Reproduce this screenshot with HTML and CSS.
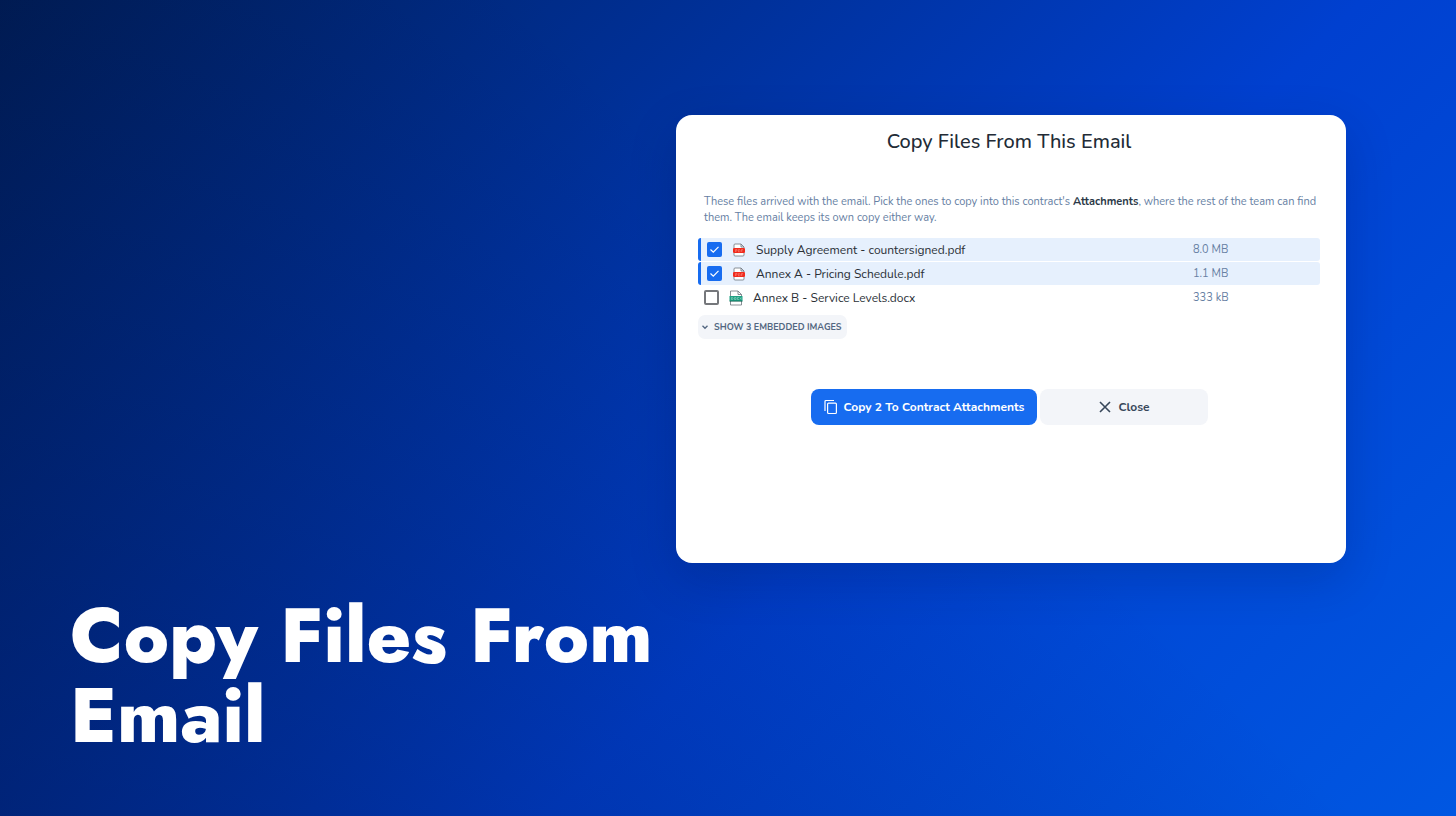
FILE: index.html
```html
<!DOCTYPE html>
<html lang="en">
<head>
<meta charset="utf-8">
<meta name="viewport" content="width=device-width, initial-scale=1">
<title>Copy Files From Email</title>
<link rel="stylesheet" href="styles.css">
</head>
<body>
<main class="slide">
  <h1 class="headline">Copy Files From Email</h1>
  <section class="dialog" aria-labelledby="dialog-title">
    <h2 class="dialog-title" id="dialog-title">Copy Files From This Email</h2>
    <p class="intro">These files arrived with the email. Pick the ones to copy into this contract's <strong>Attachments</strong>, where the rest of the team can find them. The email keeps its own copy either way.</p>
    <ul class="files">
      <li class="file selected">
        <input class="tick" type="checkbox" id="f1" checked>
        <svg class="file-icon" viewBox="0 0 16 16" aria-hidden="true"><path d="M3 6V3Q3 2 4 2H10L13 5V6M3 11V13Q3 14 4 14H12Q13 14 13 13V11M10 2V5H13" fill="#fff" stroke="#6c737c" stroke-width=".8"/><rect x="2" y="6" width="12" height="5" rx="1" fill="#f02b1d"/><path d="M4.500 10V7.500H6V9H4.500M7.500 7.500V10H8.500L9 9.500V8L8.500 7.500ZM10.500 10V7.500H12M10.500 8.800H11.700" fill="none" stroke="#f9948b" stroke-width=".5"/></svg>
        <label class="name" for="f1">Supply Agreement - countersigned.pdf</label>
        <span class="size">8.0 MB</span>
      </li>
      <li class="file selected">
        <input class="tick" type="checkbox" id="f2" checked>
        <svg class="file-icon" viewBox="0 0 16 16" aria-hidden="true"><path d="M3 6V3Q3 2 4 2H10L13 5V6M3 11V13Q3 14 4 14H12Q13 14 13 13V11M10 2V5H13" fill="#fff" stroke="#6c737c" stroke-width=".8"/><rect x="2" y="6" width="12" height="5" rx="1" fill="#f02b1d"/><path d="M4.500 10V7.500H6V9H4.500M7.500 7.500V10H8.500L9 9.500V8L8.500 7.500ZM10.500 10V7.500H12M10.500 8.800H11.700" fill="none" stroke="#f9948b" stroke-width=".5"/></svg>
        <label class="name" for="f2">Annex A - Pricing Schedule.pdf</label>
        <span class="size">1.1 MB</span>
      </li>
      <li class="file">
        <input class="tick" type="checkbox" id="f3">
        <svg class="file-icon" viewBox="0 0 16 16" aria-hidden="true"><path d="M2.500 6V1H10L13.500 4.500V6M2.500 11V15H13.500V11M10 1V4.500H13.500" fill="#fff" stroke="#6c737c" stroke-width=".8"/><rect x="1.500" y="6" width="13" height="5" fill="#1fa184"/><path d="M1.500 11.200H14.500" stroke="#0b5c4b" stroke-width=".8"/><path d="M3.500 7.500V9.500H4.500L5 9V8L4.500 7.500ZM6.500 7.500H8V9.500H6.500ZM11 7.500H9.500V9.500H11M12 7.500L13.500 9.500M13.500 7.500L12 9.500" fill="none" stroke="#a8dccf" stroke-width=".5"/></svg>
        <label class="name" for="f3">Annex B - Service Levels.docx</label>
        <span class="size">333 kB</span>
      </li>
    </ul>
    <button class="show-more" type="button">
      <svg class="chevron" viewBox="0 0 8 8" aria-hidden="true"><path d="M1.500 2.800L4 5.300L6.500 2.800" fill="none" stroke="currentColor" stroke-width="1.300"/></svg>
      SHOW 3 EMBEDDED IMAGES
    </button>
    <div class="actions">
      <button class="action primary" type="button">
        <svg class="action-icon" viewBox="0 0 16 16" aria-hidden="true"><path d="M2 12V2.500Q2 1.500 3 1.500H11" fill="none" stroke="currentColor" stroke-width="1.200"/><rect x="4.600" y="4.100" width="8.800" height="10.400" rx="1" fill="none" stroke="currentColor" stroke-width="1.200"/></svg>
        Copy 2 To Contract Attachments
      </button>
      <button class="action secondary" type="button">
        <svg class="action-icon" viewBox="0 0 16 16" aria-hidden="true"><path d="M3 3L13 13M13 3L3 13" stroke="currentColor" stroke-width="1.600"/></svg>
        Close
      </button>
    </div>
  </section>
</main>
</body>
</html>
```
FILE: styles.css
```css
* { box-sizing: border-box; }
body {
  margin: 0;
  font-family: Nunito, "Open Sans", "Noto Sans", sans-serif;
}
.slide {
  min-height: 100vh;
  padding: 115px 110px 60px 70px;
  display: grid;
  grid-template-columns: minmax(0, 606fr) minmax(0, 670fr);
  background:
    linear-gradient(45deg, rgba(0, 5, 40, .32) 0%, rgba(0, 5, 40, 0) 60%),
    linear-gradient(135deg, #001e58 0%, #0040d0 60%, #0057e2 100%);
}
.headline {
  align-self: end;
  margin: 0;
  color: #fff;
  font: 800 76px/80px Jost, Lato, sans-serif;
}
.dialog {
  align-self: start;
  min-height: 448px;
  padding: 13px 26px 32px 22px;
  background: #fff;
  border-radius: 16px;
  box-shadow: 0 16px 48px rgba(0, 10, 50, .18);
}
.dialog-title {
  margin: 0 0 38px;
  text-align: center;
  color: #222b36;
  font-family: Nunito, Lato, sans-serif;
  font-weight: 500;
  font-size: 20px;
  line-height: 28px;
}
.intro {
  margin: 0 0 12px;
  padding-left: 6px;
  color: #6680a3;
  font-size: 11px;
  line-height: 16px;
}
.intro strong { color: #2b3947; }
.files {
  margin: 0;
  padding: 0;
  list-style: none;
  display: grid;
  gap: 1px;
}
.file {
  display: flex;
  align-items: center;
  height: 23px;
  padding-left: 6px;
  border-radius: 3px;
}
.selected {
  border-left: 3px solid #176cf0;
  background: #e6f0fd;
}
.tick {
  appearance: none;
  flex: none;
  width: 15px;
  height: 15px;
  margin: 0 9px 0 0;
  border: 2px solid #75777b;
  border-radius: 2px;
  background: #fff;
}
.tick:checked {
  border: 0;
  background: #176cf0 url("data:image/svg+xml,%3Csvg xmlns='http://www.w3.org/2000/svg' viewBox='0 0 15 15'%3E%3Cpath d='M3.500 7.500L6.300 10.200L11.500 4.800' fill='none' stroke='white' stroke-width='1.200'/%3E%3C/svg%3E");
}
.file-icon {
  flex: none;
  width: 16px;
  height: 16px;
  margin-right: 9px;
}
.name {
  flex: 1;
  color: #2a2f36;
  font-size: 12px;
}
.size {
  width: 127px;
  color: #6680a3;
  font-size: 11px;
}
.show-more, .action {
  display: flex;
  align-items: center;
  border: 0;
  font-family: inherit;
  font-weight: 700;
  white-space: nowrap;
}
.show-more {
  gap: 5px;
  height: 24px;
  margin-top: 6px;
  padding: 0 6px 0 3px;
  border-radius: 7px;
  background: #f3f5f9;
  color: #526680;
  font-size: 9px;
}
.chevron { width: 8px; height: 8px; }
.actions {
  display: flex;
  justify-content: center;
  gap: 3px;
  margin-top: 50px;
}
.action {
  justify-content: center;
  gap: 5px;
  height: 36px;
  padding: 0 6px;
  border-radius: 8px;
  font-size: 12px;
}
.action-icon { width: 16px; height: 16px; }
.primary {
  width: 226px;
  background: #176cf0;
  color: #fff;
}
.secondary {
  width: 168px;
  background: #f3f5f9;
  color: #37475a;
}
```
